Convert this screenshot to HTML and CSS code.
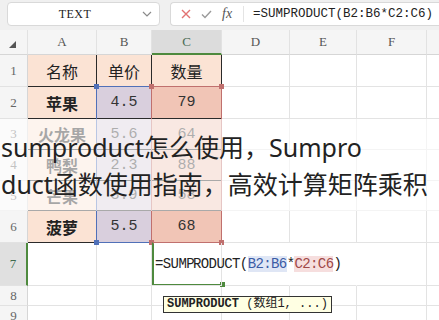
FILE: index.html
```html
<!DOCTYPE html>
<html lang="zh-CN">
  <head>
    <meta charset="utf-8">
    <title>SUMPRODUCT</title>
    <link rel="stylesheet" href="styles.css">
  </head>
  <body>

    <!-- name box + formula bar -->
    <div class="toolbar">
      <div class="namebox">
        <span class="name">TEXT</span>
        <svg class="chev" width="10" height="6" viewBox="0 0 10 6"><polyline points="1,1 5,5 9,1" fill="none" stroke="#8a8a8a" stroke-width="1.2"/></svg>
      </div>
      <div class="fbar">
        <svg width="10" height="10" viewBox="0 0 10 10"><path d="M1 1 L9 9 M9 1 L1 9" stroke="#e27272" stroke-width="1.4" fill="none"/></svg>
        <svg width="11" height="9" viewBox="0 0 11 9"><polyline points="1,4.5 4,7.5 10,1" fill="none" stroke="#9a9a9a" stroke-width="1.4"/></svg>
        <span class="fx">fx</span>
        <span class="fdiv"></span>
        <span class="ftext">=SUMPRODUCT(B2:B6*C2:C6)</span>
      </div>
    </div>

    <div class="sheet">
      <div class="grid">
        <!-- column headers -->
        <div class="hd corner"><svg width="7" height="7" viewBox="0 0 7 7"><polygon points="7,0 7,7 0,7" fill="#555"/></svg></div>
        <div class="hd">A</div>
        <div class="hd">B</div>
        <div class="hd sel">C</div>
        <div class="hd">D</div>
        <div class="hd">E</div>
        <div class="hd">F</div>
        <div class="hd"></div>

        <div class="rh">1</div>
        <div class="cell t txt">名称</div>
        <div class="cell t txt">单价</div>
        <div class="cell t txt">数量</div>
        <div class="cell"></div><div class="cell"></div><div class="cell"></div><div class="cell"></div>

        <div class="rh">2</div>
        <div class="cell t txt bold">苹果</div>
        <div class="cell t nb num">4.5</div>
        <div class="cell t nc num">79</div>
        <div class="cell"></div><div class="cell"></div><div class="cell"></div><div class="cell"></div>

        <div class="rh">3</div>
        <div class="cell t txt bold">火龙果</div>
        <div class="cell t nb num">5.6</div>
        <div class="cell t nc num">64</div>
        <div class="cell"></div><div class="cell"></div><div class="cell"></div><div class="cell"></div>

        <div class="rh">4</div>
        <div class="cell t txt bold">鸭梨</div>
        <div class="cell t nb num">2.3</div>
        <div class="cell t nc num">88</div>
        <div class="cell"></div><div class="cell"></div><div class="cell"></div><div class="cell"></div>

        <div class="rh">5</div>
        <div class="cell t txt bold">芒果</div>
        <div class="cell t nb num">3.9</div>
        <div class="cell t nc num">58</div>
        <div class="cell"></div><div class="cell"></div><div class="cell"></div><div class="cell"></div>

        <div class="rh">6</div>
        <div class="cell t txt bold">菠萝</div>
        <div class="cell t nb num">5.5</div>
        <div class="cell t nc num">68</div>
        <div class="cell"></div><div class="cell"></div><div class="cell"></div><div class="cell"></div>

        <div class="rh sel">7</div>
        <div class="cell"></div>
        <div class="cell"></div>
        <div class="cell editor">=SUMP<span class="caret"></span>RODUCT(<span class="ref-b">B2:B6</span>*<span class="ref-c">C2:C6</span>)</div>
        <div class="cell ed"></div><div class="cell ed"></div><div class="cell"></div><div class="cell"></div>

        <div class="rh">8</div>
        <div class="cell"></div><div class="cell"></div><div class="cell"></div><div class="cell"></div><div class="cell"></div><div class="cell"></div><div class="cell"></div>

        <div class="rh">9</div>
        <div class="cell"></div><div class="cell"></div><div class="cell"></div><div class="cell"></div><div class="cell"></div><div class="cell"></div><div class="cell"></div>

        <!-- overlays -->
        <div class="range range-b"><i class="h tl"></i><i class="h tr"></i><i class="h bl"></i><i class="h br"></i></div>
        <div class="range range-c"><i class="h tl"></i><i class="h tr"></i><i class="h bl"></i><i class="h br"></i></div>
        <div class="active"><i class="h br"></i></div>

        <div class="tip"><b>SUMPRODUCT</b> (数组1, ...)</div>

        <div class="caption">
          <span>sumproduct怎么使用，Sumpro</span>
          <span>duct函数使用指南，高效计算矩阵乘积</span>
        </div>
      </div>
    </div>

  </body>
</html>
```

FILE: styles.css
```css
html, body {
   margin: 0;
   padding: 0;
   background: #fff;
}

body {
   width: 439px;
   height: 320px;
   overflow: hidden;
   font-family: "Noto Sans", "Noto Sans CJK SC", sans-serif;
}

*,
*:before,
*:after {
   box-sizing: border-box;
}

/* top bar */
.toolbar {
   display: flex;
   gap: 10px;
   height: 30px;
   padding: 2px 0 0 7px;
   background: #f0f0f0;
}

.namebox {
   display: flex;
   align-items: center;
   width: 153px;
   height: 24px;
   background: #fff;
   border: 1px solid #d9d9d9;
   border-radius: 4px;
}

.name {
   flex: 1;
   text-align: center;
   font: 12px "Liberation Serif", serif;
   letter-spacing: 0.5px;
   color: #222;
}

.chev {
   margin-right: 7px;
}

.fbar {
   flex: 1;
   display: flex;
   align-items: center;
   gap: 10px;
   height: 24px;
   padding-left: 10px;
   background: #fff;
   border: 1px solid #d9d9d9;
   border-right: none;
   border-radius: 4px 0 0 4px;
   white-space: nowrap;
}

.fx {
   font: italic 14px "Liberation Serif", serif;
   color: #555;
   width: 13px;
}

.fdiv {
   width: 1px;
   height: 16px;
   background: #e4e4e4;
   margin-left: -2px;
}

.ftext {
   margin-left: -1px;
   font: 12.5px "Liberation Mono", monospace;
   color: #222;
}

/* sheet */
.sheet {
   overflow: hidden;
   height: 290px;
}

.grid {
   position: relative;
   display: grid;
   grid-template-columns: 28px 69px 55px 70px 68px 67px 70px 70px;
   grid-template-rows: 25px 32px 32px 31px 31px 30px 32px 43px 20px 20px;
}

.hd {
   display: flex;
   align-items: center;
   justify-content: center;
   background: #f5f5f5;
   border-right: 1px solid #e2e2e2;
   border-bottom: 1px solid #d6d6d6;
   font: 13px "Liberation Serif", serif;
   color: #555;
}

.hd.corner {
   justify-content: flex-start;
   padding: 4px 0 0 9px;
}

.hd.sel {
   background: #dcdcdc;
   border-bottom: 2px solid #4e8a3e;
   color: #4a6b55;
}

.rh {
   display: flex;
   align-items: center;
   justify-content: center;
   background: #f5f5f5;
   border-right: 1px solid #d6d6d6;
   border-bottom: 1px solid #e2e2e2;
   font: 13px "Liberation Serif", serif;
   color: #666;
}

.rh.sel {
   background: #e0e0e0;
   border-right: 2px solid #4e8a3e;
   color: #3f6a4d;
}

.cell {
   display: flex;
   align-items: center;
   justify-content: center;
   border-right: 1px solid #e3e3e3;
   border-bottom: 1px solid #e3e3e3;
   white-space: nowrap;
}

.cell.t {
   background: #fbe3d4;
   border-right-color: #2a2a2a;
   border-bottom-color: #2a2a2a;
}

.cell.nb {
   background: #d9cfdd;
}

.cell.nc {
   background: #f1c5b6;
}

.txt {
   font-family: "Noto Sans CJK SC", sans-serif;
   font-size: 16px;
   color: #222;
}

.bold {
   font-weight: bold;
}

.num {
   font: 15px "Liberation Mono", monospace;
   color: #333;
}

.cell.ed {
   border-right-color: transparent;
}

.editor {
   position: relative;
   z-index: 5;
   justify-content: flex-start;
   padding-left: 3px;
   overflow: visible;
   font: 14px "Liberation Mono", monospace;
   letter-spacing: -0.6px;
   color: #222;
}

.caret {
   display: inline-block;
   width: 1px;
   height: 17px;
   margin-right: -1px;
   background: #222;
}

.ref-b {
   color: #3b5ba5;
   background: #dfe6f5;
}

.ref-c {
   color: #a04848;
   background: #f6dede;
}

/* selection overlays */
.range {
   position: absolute;
   top: -1px;
   left: -1px;
   right: 0;
   bottom: 0;
   grid-row: 3 / 8;
   border: 1px solid;
   z-index: 2;
}

.range-b {
   grid-column: 3 / 4;
   border-color: #5070b8;
}

.range-c {
   grid-column: 4 / 5;
   border-color: #c0706e;
   z-index: 3;
}

.h {
   position: absolute;
   width: 5px;
   height: 5px;
}

.range-b .h { background: #5070b8; }
.range-c .h { background: #c0706e; }

.h.tl { top: -3px; left: -3px; }
.h.tr { top: -3px; right: -3px; }
.h.bl { bottom: -3px; left: -3px; }
.h.br { bottom: -3px; right: -3px; }

.active {
   position: absolute;
   grid-column: 4 / 5;
   grid-row: 8 / 9;
   top: -1px;
   left: 0;
   right: 0;
   bottom: 0;
   border: 2px solid #4e8a3e;
   border-top-color: transparent;
   border-right: none;
   z-index: 4;
}

.active .h {
   background: #4e8a3e;
   right: -3px;
   bottom: -3px;
}

.tip {
   position: absolute;
   grid-column: 4 / 9;
   grid-row: 9 / 10;
   top: 10px;
   left: 11px;
   height: 17px;
   padding: 0 3px;
   background: #ffffe3;
   border: 1px solid #333;
   font: 12px "Liberation Mono", "Noto Sans CJK SC", monospace;
   line-height: 15px;
   color: #222;
   white-space: nowrap;
   z-index: 6;
}

.caption {
   position: absolute;
   grid-column: 1 / -1;
   grid-row: 4 / 7;
   top: 0;
   left: 0;
   right: 0;
   bottom: 0;
   padding: 10px 0 0 1px;
   background: rgba(255, 255, 255, 0.6);
   font-size: 25px;
   line-height: 37px;
   color: #222;
   z-index: 7;
}

.caption span {
   display: block;
   white-space: nowrap;
}
```
